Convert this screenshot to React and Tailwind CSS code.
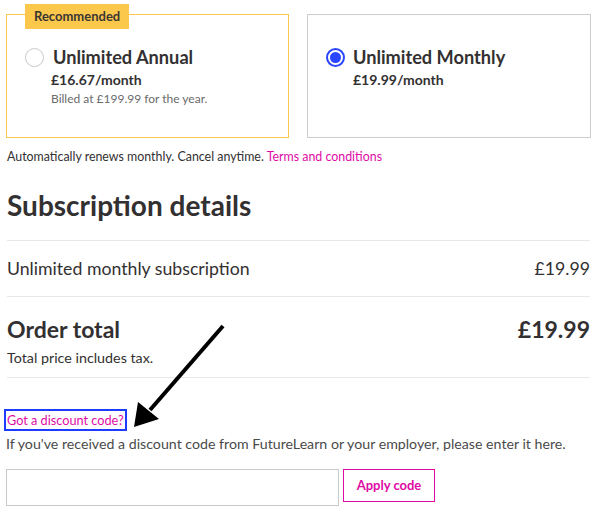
export default function App() {
  return (
    <div
      className="relative h-[520px] w-[597px] overflow-hidden bg-white text-[#333031]"
      style={{ fontFamily: 'Lato, "Noto Sans", sans-serif' }}
    >
      <div className="flex gap-[18px] px-[6px] pt-[14px]">
        <div className="relative h-[124px] w-[283px] border border-[#fbc84c] pl-[18px] pt-[30px]">
          <span className="absolute left-[18px] top-[-11px] bg-[#fbc84c] px-[9px] py-[4px] text-[13px] font-bold leading-[17px] text-[#3a3633]">
            Recommended
          </span>
          <div className="flex items-start gap-[9px]">
            <span className="mt-[3px] h-[19px] w-[19px] rounded-full border border-[#c9c9c9]" />
            <div>
              <div className="text-[18.2px] font-bold leading-[24px]">Unlimited Annual</div>
              <div className="ml-[-2px] text-[14px] font-bold leading-[21px]">£16.67/month</div>
              <div className="ml-[-2px] text-[12px] leading-[18px] text-[#6b6b6b]">Billed at £199.99 for the year.</div>
            </div>
          </div>
        </div>
        <div className="h-[124px] w-[284px] border border-[#cccccc] pl-[18px] pt-[30px]">
          <div className="flex items-start gap-[8px]">
            <span className="mt-[3px] flex h-[19px] w-[19px] items-center justify-center rounded-full border-2 border-[#2b46ff]">
              <span className="h-[11px] w-[11px] rounded-full bg-[#2b46ff]" />
            </span>
            <div>
              <div className="text-[18.2px] font-bold leading-[24px]">Unlimited Monthly</div>
              <div className="text-[14px] font-bold leading-[21px]">£19.99/month</div>
            </div>
          </div>
        </div>
      </div>

      <p className="mt-[11px] px-[7px] text-[12.4px] leading-[16px]">
        Automatically renews monthly. Cancel anytime.{' '}
        <a className="text-[#de0aa5]">Terms and conditions</a>
      </p>

      <div className="px-[7px]">
        <h2 className="mt-[22px] text-[28px] font-bold leading-[36px]">Subscription details</h2>
        <div className="mt-[17px] flex items-center justify-between border-y border-[#e8e8e8] py-[16px] text-[17.7px] leading-[23px]">
          <span>Unlimited monthly subscription</span>
          <span>£19.99</span>
        </div>
        <div className="border-b border-[#e8e8e8] pb-[10px] pt-[18px]">
          <div className="flex items-center justify-between text-[23px] font-bold leading-[28px]">
            <span>Order total</span>
            <span>£19.99</span>
          </div>
          <div className="mt-[6px] text-[14.3px] leading-[18px]">Total price includes tax.</div>
        </div>
      </div>

      <div className="px-[6px]">
        <a className="mt-[31px] ml-[-2px] inline-block border-2 border-[#1d3cff] px-[1px] text-[12.7px] leading-[18px] text-[#de0aa5]">
          Got a discount code?
        </a>
        <p className="mt-[3px] text-[14.2px] leading-[20px] text-[#4a4a4a]">
          If you've received a discount code from FutureLearn or your employer, please enter it here.
        </p>
        <div className="mt-[15px] flex items-start gap-[4px]">
          <input className="h-[37px] w-[333px] border border-[#c9c9c9] outline-none" />
          <button className="h-[33px] w-[92px] border border-[#de0aa5] text-[13px] font-bold text-[#de0aa5]">
            Apply code
          </button>
        </div>
      </div>

      <svg className="absolute left-0 top-0" width="597" height="520">
        <line x1="223" y1="326" x2="150" y2="410" stroke="#000" strokeWidth="4" />
        <polygon points="134,427 138,402 159,419" fill="#000" />
      </svg>
    </div>
  )
}
